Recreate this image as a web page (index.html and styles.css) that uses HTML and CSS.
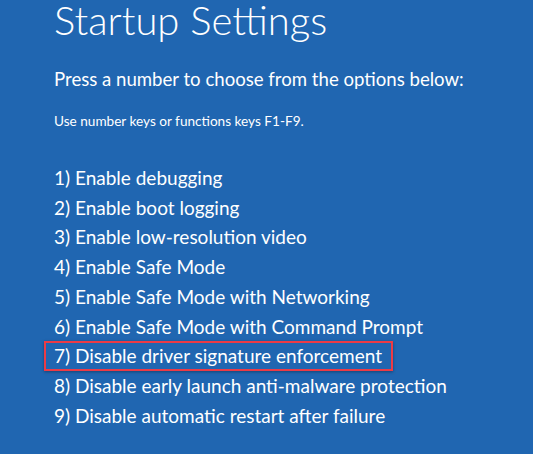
FILE: index.html
```html
<!DOCTYPE html>
<html lang="en">
<head>
<meta charset="utf-8">
<title>Startup Settings</title>
<link rel="stylesheet" href="styles.css">
</head>
<body>
<main class="screen">
  <h1 class="title">Startup Settings</h1>
  <p class="prompt">Press a number to choose from the options below:</p>
  <p class="hint">Use number keys or functions keys F1-F9.</p>
  <ol class="options">
    <li class="option">1) Enable debugging</li>
    <li class="option">2) Enable boot logging</li>
    <li class="option">3) Enable low-resolution video</li>
    <li class="option">4) Enable Safe Mode</li>
    <li class="option">5) Enable Safe Mode with Networking</li>
    <li class="option">6) Enable Safe Mode with Command Prompt</li>
    <li class="option option-marked">7) Disable driver signature enforcement</li>
    <li class="option">8) Disable early launch anti-malware protection</li>
    <li class="option">9) Disable automatic restart after failure</li>
  </ol>
</main>
</body>
</html>
```

FILE: styles.css
```css
html, body {
  margin: 0;
  padding: 0;
  background: #2066b1;
  height: 100%;
  overflow: hidden;
}

.screen {
  display: flex;
  flex-direction: column;
  align-items: flex-start;
  padding: 0 0 0 54px;
  color: #ffffff;
  font-family: Lato, "Open Sans", sans-serif;
}

.title {
  margin: 0;
  font-size: 40px;
  line-height: 40px;
  font-weight: 300;
  letter-spacing: 0;
}

.prompt {
  margin: 24.8px 0 0;
  font-size: 18.6px;
  line-height: 28px;
  font-weight: 400;
}

.hint {
  margin: 17.9px 0 0;
  font-size: 13.6px;
  line-height: 20px;
}

.options {
  list-style: none;
  margin: 32.3px 0 0;
  padding: 0;
  display: flex;
  flex-direction: column;
  align-items: flex-start;
}

.option {
  font-size: 19px;
  line-height: 29.75px;
  height: 29.75px;
  white-space: nowrap;
}

.option-marked {
  box-sizing: border-box;
  margin-left: -10px;
  padding: 0 9px 0 8px;
  border: 2px solid #ec3b46;
  line-height: 25.75px;
  box-shadow: 0 1px 3px rgba(0, 0, 0, 0.35);
}
```
